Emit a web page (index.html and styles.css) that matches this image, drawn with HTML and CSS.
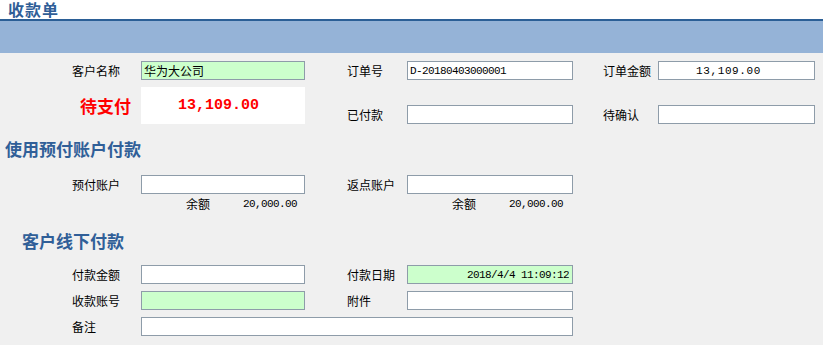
FILE: index.html
```html
<!DOCTYPE html>
<html lang="zh-CN">
<head>
    <meta charset="UTF-8">
    <title>收款单</title>
    <link rel="stylesheet" href="styles.css">
</head>
<body>
    <header class="title-bar">
        <h1>收款单</h1>
    </header>
    <div class="band"></div>

    <main class="form">
        <div class="grid">
            <label class="c1">客户名称</label>
            <input class="field green cjk" type="text" value="华为大公司" readonly>
            <label class="c3">订单号</label>
            <input class="field" type="text" value="D-20180403000001" readonly>
            <label class="c5">订单金额</label>
            <input class="field center wide" type="text" value="13,109.00" readonly>

            <div class="due-label">待支付</div>
            <div class="due-amount">13,109.00</div>
            <label class="c3 low">已付款</label>
            <input class="field low" type="text" readonly>
            <label class="c5 low">待确认</label>
            <input class="field low" type="text" readonly>
        </div>

        <h2 class="section">使用预付账户付款</h2>
        <div class="grid">
            <label class="c1">预付账户</label>
            <input class="field" type="text" readonly>
            <label class="c3">返点账户</label>
            <input class="field" type="text" readonly>
        </div>
        <div class="grid balance-row">
            <div></div>
            <div class="balance"><span>余额</span><span class="num">20,000.00</span></div>
            <div></div>
            <div class="balance"><span>余额</span><span class="num">20,000.00</span></div>
        </div>

        <h2 class="section indent">客户线下付款</h2>
        <div class="grid">
            <label class="c1">付款金额</label>
            <input class="field" type="text" readonly>
            <label class="c3">付款日期</label>
            <input class="field green right" type="text" value="2018/4/4 11:09:12" readonly>

            <label class="c1">收款账号</label>
            <input class="field green" type="text" readonly>
            <label class="c3">附件</label>
            <input class="field" type="text" readonly>

            <label class="c1">备注</label>
            <input class="field span3" type="text" readonly>
        </div>
    </main>
</body>
</html>
```

FILE: styles.css
```css
body {
    margin: 0;
    font-family: "Noto Sans CJK SC", sans-serif;
    font-size: 12px;
    color: #000;
    background: #f0f0f0;
}
.title-bar {
    background: #fff;
    height: 19px;
    border-bottom: 2px solid #2b5f96;
}
.title-bar h1 {
    margin: 0;
    padding-left: 8px;
    font-size: 16px;
    line-height: 19px;
    letter-spacing: 1px;
    font-weight: bold;
    color: #2f5e97;
}
.band {
    height: 32px;
    background: #95b3d7;
}
.form {
    padding-top: 8px;
}
.grid {
    display: grid;
    grid-template-columns: 141px 164px 102px 166px 85px 157px;
    row-gap: 7px;
    align-items: center;
}
label {
    line-height: 19px;
    white-space: nowrap;
}
.c1 {
    grid-column: 1;
    padding-left: 72px;
}
.c3 {
    grid-column: 3;
    padding-left: 42px;
}
.c5 {
    grid-column: 5;
    padding-left: 30px;
}
.low {
    align-self: end;
}
.field {
    box-sizing: border-box;
    width: 100%;
    height: 19px;
    margin: 0;
    padding: 0 2px;
    border: 1px solid #8e9ca9;
    border-radius: 0;
    background: #fff;
    font-family: "Liberation Mono", monospace;
    font-size: 11px;
    letter-spacing: -0.6px;
    color: #000;
    outline: none;
}
.field.cjk {
    font-family: "Noto Sans CJK SC", sans-serif;
    font-size: 12px;
    letter-spacing: 0;
}
.field.green {
    background: #ccffcc;
}
.field.center {
    text-align: center;
    padding-right: 18px;
}
.field.wide {
    letter-spacing: 0.6px;
}
.field.right {
    text-align: right;
    padding-right: 3px;
}
.field.span3 {
    grid-column: 2 / 5;
}
.due-label {
    padding-left: 80px;
    color: #f00;
    font-size: 17px;
    font-weight: bold;
    white-space: nowrap;
}
.due-amount {
    height: 37px;
    line-height: 37px;
    padding-left: 37px;
    background: #fff;
    color: #f00;
    font-family: "Liberation Mono", monospace;
    font-size: 15px;
    font-weight: bold;
}
.section {
    margin: 0;
    padding: 14px 0 15px 5px;
    font-size: 17px;
    line-height: 22px;
    font-weight: bold;
    color: #305f98;
}
.section.indent {
    padding: 18px 0 13px 22px;
}
.balance-row {
    margin-top: 2px;
}
.balance {
    display: flex;
    padding-left: 45px;
    line-height: 16px;
}
.balance span:first-child {
    width: 57px;
}
.num {
    font-family: "Liberation Mono", monospace;
    font-size: 11px;
    letter-spacing: -0.6px;
}
```
